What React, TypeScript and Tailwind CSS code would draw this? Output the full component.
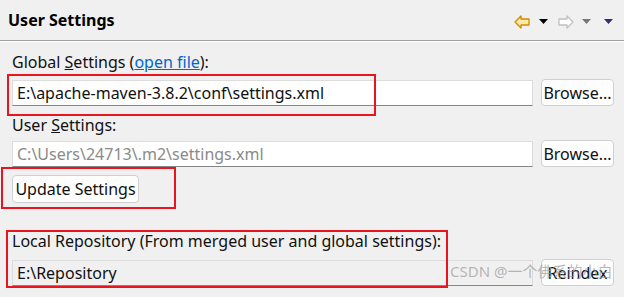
import React from 'react';

const font = { fontFamily: '"Microsoft YaHei UI", "Noto Sans", "Noto Sans CJK SC", sans-serif' };

const Tri = ({ color }: { color: string }) => (
    <svg width="9" height="6" viewBox="0 0 9 6">
        <polygon points="0,0 9,0 4.5,5" fill={color} />
    </svg>
);

const Arrow = ({ fill, stroke, flip }: { fill: string; stroke: string; flip?: boolean }) => (
    <svg width="16" height="14" viewBox="0 0 16 14" style={flip ? { transform: 'scaleX(-1)' } : undefined}>
        <path d="M1 7 L7 1 L7 4 L15 4 L15 10 L7 10 L7 13 Z" fill={fill} stroke={stroke} strokeWidth="1.3" strokeLinejoin="round" />
    </svg>
);

const Field = ({ value, muted, readOnly }: { value: string; muted?: boolean; readOnly?: boolean }) => (
    <div
        className={`flex-1 h-[26px] flex items-center px-[4px] border border-[#dcdcdc] border-b-[#868686] text-[16px] ${
            readOnly ? 'bg-[#f0f0f0]' : 'bg-white'
        } ${muted ? 'text-[#8a8a8a]' : 'text-[#111]'}`}
    >
        {value}
    </div>
);

const Btn = ({ label, w }: { label: string; w: string }) => (
    <button className={`${w} h-[27px] rounded-[4px] border border-[#d0d0d0] bg-[#fdfdfd] text-[16px] text-[#111] flex items-center justify-center`}>
        {label}
    </button>
);

export default function App() {
    return (
        <div className="relative w-[624px] h-[297px] bg-[#f0f0f0] overflow-hidden" style={font}>
            <div className="h-[41px] flex items-center justify-between pl-[8px] pr-[11px] border-b border-[#a0a0a0]">
                <span className="text-[16px] font-bold text-black">User Settings</span>
                <div className="flex items-center pt-[3px]">
                    <Arrow fill="#ffe9a8" stroke="#d08a00" />
                    <span className="ml-[9px] flex"><Tri color="#000" /></span>
                    <span className="ml-[10px] flex"><Arrow fill="#ffffff" stroke="#c0c0c0" flip /></span>
                    <span className="ml-[8px] flex"><Tri color="#777" /></span>
                    <span className="ml-[13px] flex"><Tri color="#3b2a6e" /></span>
                </div>
            </div>
            <div className="border-t border-white" />

            <div className="flex flex-col pl-[12px] pr-[10px] text-[16px] text-[#111]">
                <div className="h-[37px] flex items-center pt-[3px]">
                    <span>
                        Global <u>S</u>ettings (<span className="text-[#0066cc] underline">open file</span>):
                    </span>
                </div>
                <div className="flex items-center gap-[8px]">
                    <Field value="E:\apache-maven-3.8.2\conf\settings.xml" />
                    <Btn label="Browse..." w="w-[73px]" />
                </div>
                <div className="h-[34px] flex items-center pt-[4px]">
                    <span>
                        User <u>S</u>ettings:
                    </span>
                </div>
                <div className="flex items-center gap-[8px]">
                    <Field value="C:\Users\24713\.m2\settings.xml" muted />
                    <Btn label="Browse..." w="w-[73px]" />
                </div>
                <div className="pt-[8px]">
                    <Btn label="Update Settings" w="w-[127px] h-[28px]" />
                </div>
                <div className="h-[56px] flex items-end pb-[6px]">
                    <span>Local Repository (From merged user and global settings):</span>
                </div>
                <div className="flex items-center gap-[8px]">
                    <Field value="E:\Repository" readOnly />
                    <Btn label="Reindex" w="w-[73px]" />
                </div>
            </div>

            <div className="absolute left-[7px] top-[74px] w-[369px] h-[42px] border-2 border-[#e8141e]" />
            <div className="absolute left-[1px] top-[167px] w-[175px] h-[42px] border-2 border-[#e8141e]" />
            <div className="absolute left-[6px] top-[230px] w-[442px] h-[58px] border-2 border-[#e8141e]" />

            <div className="absolute left-[450px] top-[260px] text-[15px] text-[#9a9a9a]/70" style={{ fontFamily: '"Noto Sans", "Noto Sans CJK SC", sans-serif' }}>
                CSDN @一个佛系的小白
            </div>
        </div>
    );
}
